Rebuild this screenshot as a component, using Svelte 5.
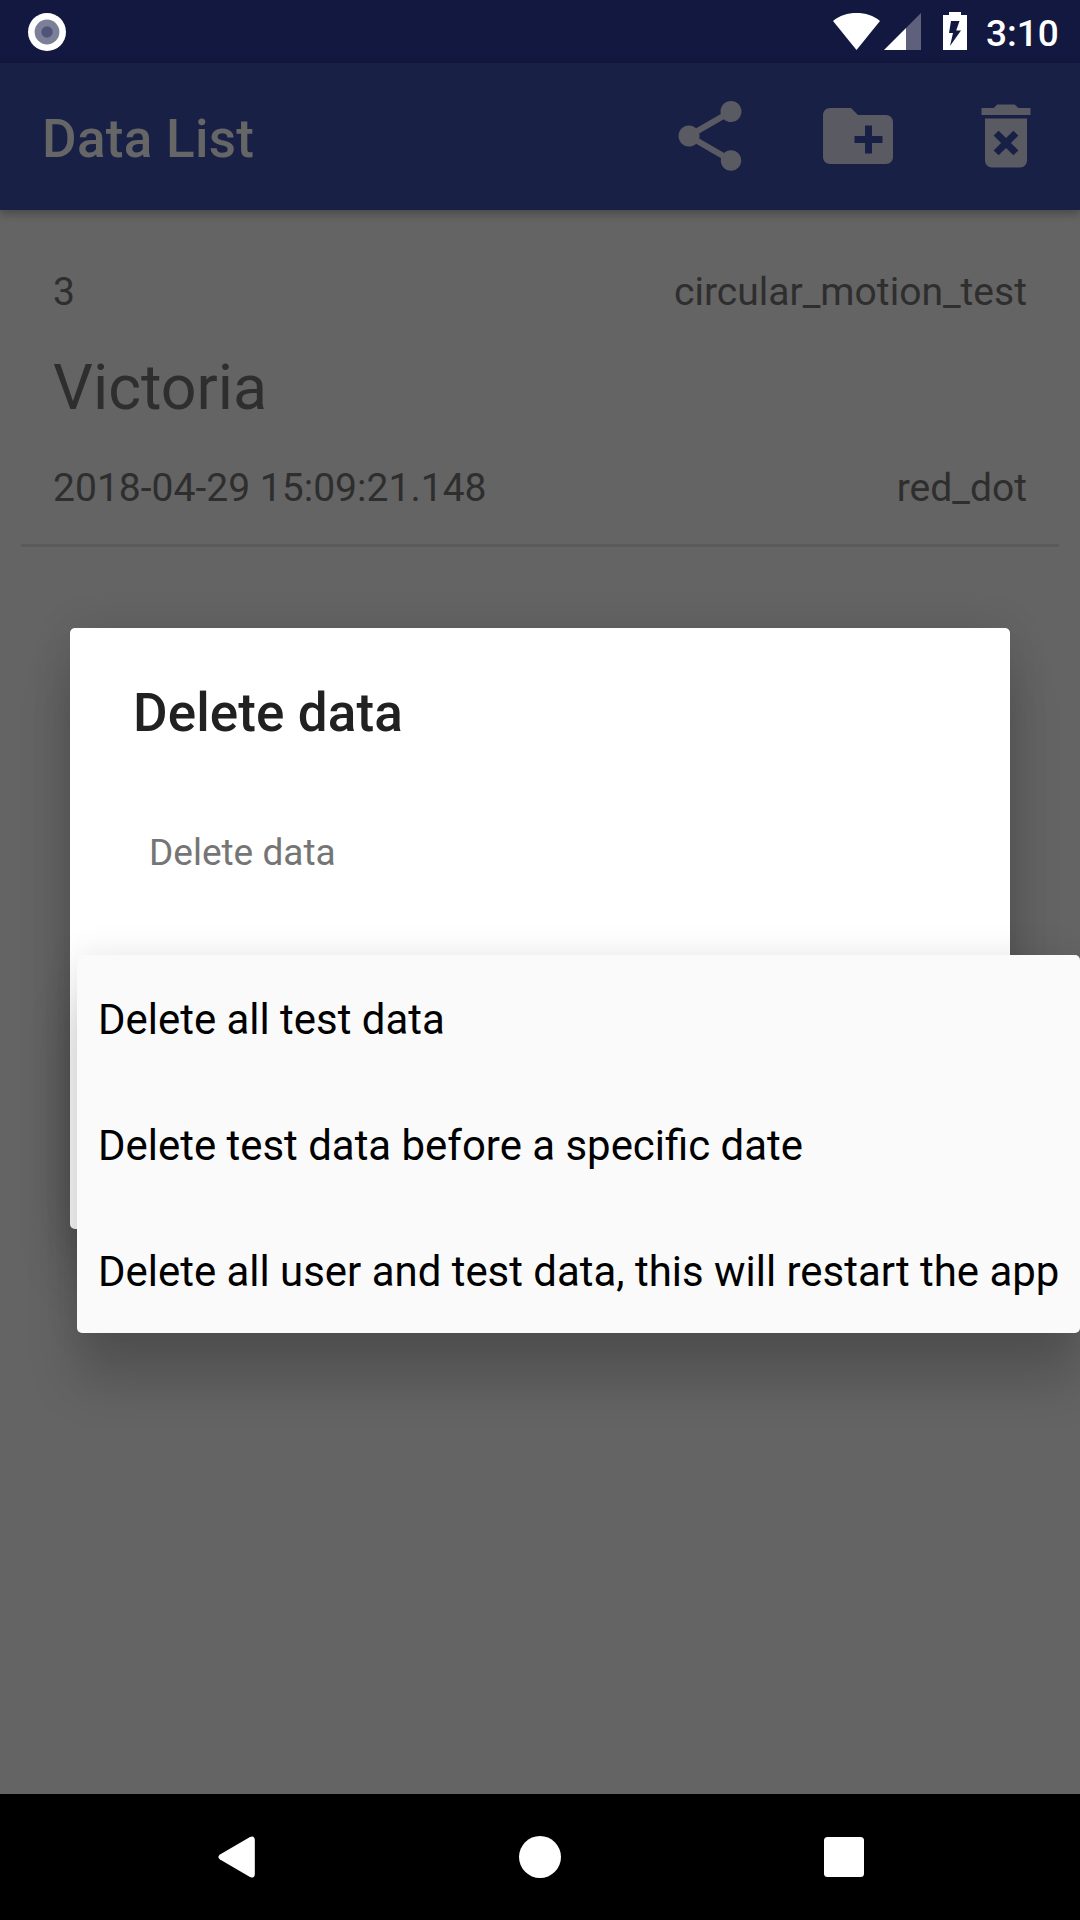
<script>
  const records = [
    {
      id: '3',
      test: 'circular_motion_test',
      name: 'Victoria',
      date: '2018-04-29 15:09:21.148',
      pattern: 'red_dot'
    }
  ];

  const options = [
    'Delete all test data',
    'Delete test data before a specific date',
    'Delete all user and test data, this will restart the app'
  ];
</script>

<div class="screen">
  <header class="status">
    <svg class="record" viewBox="0 0 38 38" aria-hidden="true">
      <circle cx="19" cy="19" r="19" fill="#fff" />
      <circle cx="19" cy="19" r="12.4" fill="#7d7f98" />
      <circle cx="19" cy="19" r="5.7" fill="#50547a" />
    </svg>
    <div class="indicators">
      <svg class="wifi" viewBox="0 0 47 38" aria-hidden="true">
        <path d="M0 9C6.5 3.5 14.5 1 23.5 1S40.500 3.500 47 9L23.500 38Z" fill="#fff" />
      </svg>
      <svg class="signal" viewBox="0 0 37 38" aria-hidden="true">
        <path d="M22 16L37 1V38H22Z" fill="#5f617c" />
        <path d="M0 38L22 16V38Z" fill="#fff" />
      </svg>
      <svg class="battery" viewBox="0 0 24 38" aria-hidden="true">
        <path
          fill="#fff"
          fill-rule="evenodd"
          d="M6 0H18V3H24V38H0V3H6ZM8 9L6 21H10L7 34L18 18.500H13.200L16.500 9Z"
        />
      </svg>
      <span class="clock">3:10</span>
    </div>
  </header>

  <div class="app">
    <nav class="toolbar">
      <h1>Data List</h1>
      <div class="actions">
        <svg viewBox="0 0 24 24" aria-label="Share">
          <path
            d="M18 16.080c-.760 0-1.440.300-1.960.770L8.910 12.700c.050-.230.090-.460.090-.700s-.040-.470-.090-.700l7.050-4.110c.540.500 1.250.810 2.040.810 1.660 0 3-1.340 3-3s-1.340-3-3-3-3 1.340-3 3c0 .240.040.470.090.700L8.040 9.810C7.500 9.310 6.790 9 6 9c-1.660 0-3 1.340-3 3s1.340 3 3 3c.790 0 1.500-.310 2.040-.810l7.120 4.160c-.050.210-.080.430-.080.650 0 1.610 1.310 2.920 2.920 2.920s2.920-1.310 2.920-2.920-1.310-2.920-2.920-2.920z"
          />
        </svg>
        <svg viewBox="0 0 24 24" aria-label="New folder">
          <path
            d="M20 6h-8l-2-2H4c-1.110 0-1.990.890-1.990 2L2 18c0 1.110.890 2 2 2h16c1.110 0 2-.890 2-2V8c0-1.110-.890-2-2-2zm-1 8h-3v3h-2v-3h-3v-2h3V9h2v3h3v2z"
          />
        </svg>
        <svg viewBox="0 0 24 24" aria-label="Delete">
          <path
            d="M6 19c0 1.100.900 2 2 2h8c1.100 0 2-.900 2-2V7H6v12zm2.460-7.120l1.410-1.410L12 12.590l2.120-2.120 1.410 1.410L13.410 14l2.120 2.120-1.410 1.410L12 15.410l-2.120 2.120-1.410-1.410L10.590 14l-2.130-2.120zM15.500 4l-1-1h-5l-1 1H5v2h14V4z"
          />
        </svg>
      </div>
    </nav>

    <main>
      {#each records as r}
        <article>
          <div class="line"><span>{r.id}</span><span>{r.test}</span></div>
          <h2>{r.name}</h2>
          <div class="line"><span>{r.date}</span><span>{r.pattern}</span></div>
        </article>
      {/each}
    </main>

    <div class="overlay">
      <section class="dialog">
        <h3>Delete data</h3>
        <p>Delete data</p>
      </section>
    </div>
    <ul class="menu">
      {#each options as option}
        <li>{option}</li>
      {/each}
    </ul>
  </div>

  <footer class="navbar">
    <svg class="back" viewBox="0 0 37 42" aria-label="Back">
      <path d="M32 1L2 18.500Q-1.200 21 2 23.500L32 41Q36.500 43 36.800 38V4Q36.500-1 32 1Z" />
    </svg>
    <svg class="home" viewBox="0 0 42 42" aria-label="Home">
      <circle cx="21" cy="21" r="21" />
    </svg>
    <svg class="recent" viewBox="0 0 40 40" aria-label="Recent apps">
      <rect width="40" height="40" rx="3.500" />
    </svg>
  </footer>
</div>

<style>
  :global(body) {
    margin: 0;
    background: #646464;
  }

  .screen {
    width: 1080px;
    height: 1920px;
    display: flex;
    flex-direction: column;
    overflow: hidden;
    background: #646464;
    font-family: Roboto, sans-serif;
  }

  h1,
  h2,
  h3,
  p,
  ul {
    margin: 0;
    padding: 0;
  }

  svg {
    display: block;
    flex: none;
  }

  .status {
    height: 63px;
    flex: none;
    box-sizing: border-box;
    display: flex;
    justify-content: space-between;
    align-items: flex-start;
    padding: 12px 21px 0 28px;
    background: #131840;
    color: #fff;
  }

  .record {
    width: 38px;
    height: 38px;
    margin-top: 0.5px;
  }

  .indicators {
    display: flex;
  }

  .wifi {
    width: 47px;
    height: 38px;
  }

  .signal {
    width: 37px;
    height: 38px;
    margin-left: 4px;
  }

  .battery {
    width: 24px;
    height: 38px;
    margin-left: 22px;
  }

  .clock {
    width: 73px;
    margin-left: 19px;
    font-size: 37px;
    font-weight: 500;
    line-height: 43px;
  }

  .app {
    position: relative;
    flex: 1;
    display: flex;
    flex-direction: column;
  }

  .toolbar {
    height: 147px;
    box-sizing: border-box;
    display: flex;
    justify-content: space-between;
    padding: 31px 32px 0 42px;
    background: #192046;
    box-shadow: 0 3px 9px rgba(0, 0, 0, 0.3);
  }

  h1 {
    font-size: 53px;
    font-weight: 500;
    line-height: 91px;
    letter-spacing: 0.3px;
    color: #666;
  }

  .actions {
    display: flex;
    gap: 64px;
  }

  .actions svg {
    width: 84px;
    height: 84px;
    fill: #5a5a62;
  }

  main {
    padding: 0 21px;
    color: #2e2e2e;
  }

  article {
    display: flex;
    flex-direction: column;
    padding: 59px 32px 33px;
    border-bottom: 3px solid #5a5a5a;
  }

  .line {
    display: flex;
    justify-content: space-between;
    font-size: 39.06px;
    line-height: 46px;
  }

  h2 {
    margin: 36px 0 40px;
    font-size: 62.7px;
    font-weight: 400;
    line-height: 74px;
  }

  .overlay {
    position: absolute;
    inset: 0;
    display: flex;
    align-items: center;
    justify-content: center;
    overflow: hidden;
  }

  .dialog {
    width: 940px;
    height: 601px;
    box-sizing: border-box;
    padding: 54px 63px;
    border-radius: 5px;
    background: #fff;
    box-shadow:
      0 46px 50px rgba(0, 0, 0, 0.18),
      0 0 40px rgba(0, 0, 0, 0.11);
  }

  h3 {
    font-size: 53px;
    font-weight: 500;
    line-height: 63px;
    letter-spacing: 0.1px;
    color: #212121;
  }

  p {
    margin-top: 86px;
    padding-left: 16px;
    font-size: 37px;
    line-height: 43px;
    color: #757575;
  }

  .menu {
    position: absolute;
    top: 892px;
    left: 77px;
    width: 1003px;
    list-style: none;
    border-radius: 5px;
    background: #fafafa;
    box-shadow:
      0 49px 50px rgba(0, 0, 0, 0.18),
      0 0 34px rgba(0, 0, 0, 0.1);
  }

  li {
    height: 126px;
    box-sizing: border-box;
    padding: 3px 21px 0;
    font-size: 41.93px;
    line-height: 123px;
    white-space: nowrap;
    color: #000;
  }

  .navbar {
    height: 126px;
    flex: none;
    box-sizing: border-box;
    display: grid;
    grid-template-columns: 37px 1fr 40px;
    align-items: center;
    justify-items: center;
    padding: 0 216px 0 218px;
    background: #000;
    fill: #fff;
  }

  .back {
    width: 37px;
    height: 42px;
  }

  .home {
    width: 42px;
    height: 42px;
    margin-left: 1px;
  }

  .recent {
    width: 40px;
    height: 40px;
  }
</style>
